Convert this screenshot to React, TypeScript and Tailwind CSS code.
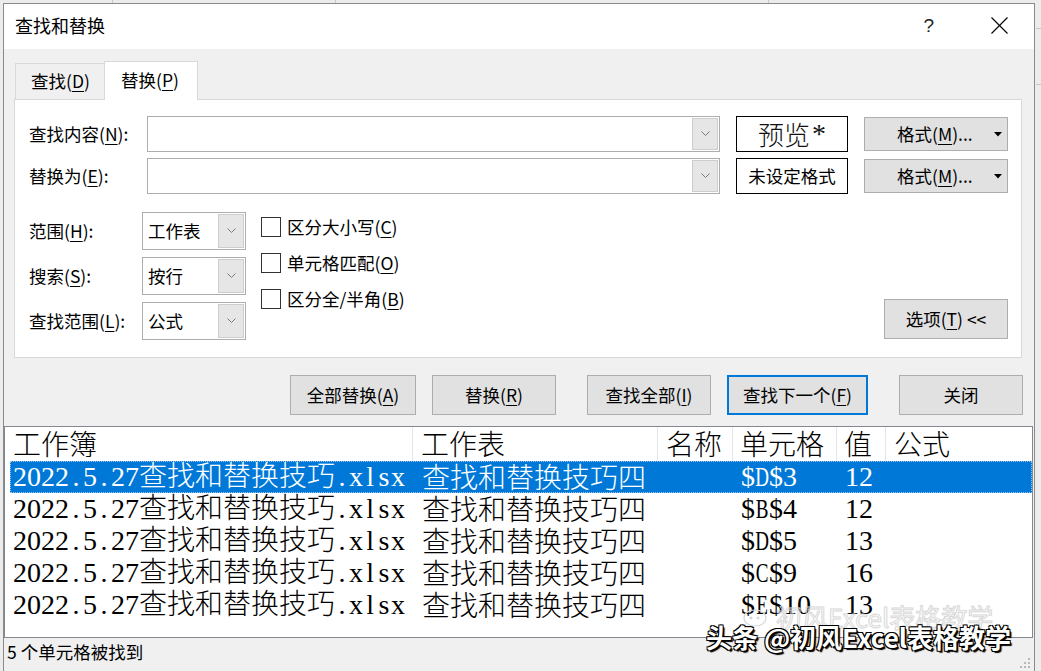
import React from "react";

const K = ({ c }: { c: string }) => (
  <span className="underline decoration-1 underline-offset-[3px]">{c}</span>
);

function Mixed({ t }: { t: string }) {
  const parts = t.split(/([\x00-\x7F]+)/).filter(Boolean);
  return (
    <>
      {parts.map((p, i) =>
        /^[\x00-\x7F]+$/.test(p) ? (
          <span key={i} className="font-['Liberation_Serif',serif]">
            {p.split("").map((ch, j) => (
              <span
                key={j}
                className={
                  /[A-Z]/.test(ch)
                    ? "inline-flex w-[14px] justify-center scale-x-[0.68]"
                    : "inline-flex w-[14px] justify-center"
                }
              >
                {ch}
              </span>
            ))}
          </span>
        ) : (
          <span key={i}>{p}</span>
        )
      )}
    </>
  );
}

const Chevron = () => (
  <svg width="9" height="6" viewBox="0 0 9 6" className="block">
    <polyline points="0.5,0.5 4.5,4.5 8.5,0.5" fill="none" stroke="#7a7a7a" strokeWidth="1" />
  </svg>
);

const DropBtn = () => (
  <div className="w-[26px] h-full bg-[#e6e6e6] border border-[#cdcdcd] flex items-center justify-center">
    <Chevron />
  </div>
);

function Select({ v }: { v: string }) {
  return (
    <div className="w-[104px] h-[38px] border border-[#adadad] bg-white flex items-center p-px">
      <div className="flex-1 pl-[4px] text-[17.5px] leading-none">{v}</div>
      <DropBtn />
    </div>
  );
}

function Check({ children }: { children: React.ReactNode }) {
  return (
    <div className="h-[36px] flex items-center">
      <div className="w-[20px] h-[20px] border border-[#333333] bg-white" />
      <div className="ml-[6px] text-[17.5px] leading-none">{children}</div>
    </div>
  );
}

function Btn({ children, w, focus }: { children: React.ReactNode; w: string; focus?: boolean }) {
  return (
    <div
      className={
        focus
          ? "h-[40px] border-2 border-[#0078d7] bg-[#e1e1e1] flex items-center justify-center text-[17.5px] leading-none " + w
          : "h-[40px] border border-[#adadad] bg-[#e1e1e1] flex items-center justify-center text-[17.5px] leading-none " + w
      }
    >
      {children}
    </div>
  );
}

const rows = [
  ["$D$3", "12"],
  ["$B$4", "12"],
  ["$D$5", "13"],
  ["$C$9", "16"],
  ["$E$10", "13"],
];

export default function App() {
  return (
    <div className="w-[1041px] h-[671px] overflow-hidden bg-[#ececec] relative font-['Noto_Sans_CJK_SC','Noto_Sans',sans-serif] text-black">
      {/* excel background hints */}
      <div className="absolute left-[112px] top-0 w-px h-[3px] bg-[#c8c8c8]" />
      <div className="absolute left-[335px] top-0 w-px h-[3px] bg-[#c8c8c8]" />
      <div className="absolute left-[768px] top-0 w-px h-[3px] bg-[#c8c8c8]" />
      <div className="absolute left-[1036px] top-[28px] w-[5px] h-px bg-[#c8c8c8]" />
      <div className="absolute left-[1036px] top-[84px] w-[5px] h-px bg-[#c8c8c8]" />

      <div className="ml-[3px] mt-[3px] w-[1032px] h-[669px] border-l border-t border-r border-[#8a8a8a] bg-[#f0f0f0] flex flex-col">
        {/* title bar */}
        <div className="h-[45px] bg-white flex items-center pl-[11px] pb-[3px] shrink-0">
          <div className="text-[18px] leading-none">查找和替换</div>
          <div className="flex-1" />
          <div className="text-[19px] leading-none font-['Liberation_Sans',sans-serif] text-[#222]">?</div>
          <div className="ml-[57px] mr-[26px]">
            <svg width="17" height="17" viewBox="0 0 17 17" className="block">
              <line x1="0.5" y1="0.5" x2="16.5" y2="16.5" stroke="#000" strokeWidth="1.1" />
              <line x1="16.5" y1="0.5" x2="0.5" y2="16.5" stroke="#000" strokeWidth="1.1" />
            </svg>
          </div>
        </div>

        {/* tabs */}
        <div className="mt-[12px] h-[38px] flex items-end pl-[11px] shrink-0">
          <div className="w-[89px] h-[36px] border-t border-l border-[#d9d9d9] flex items-center pl-[15px] pb-[2px] text-[17.5px] leading-none">
            查找(<K c="D" />)
          </div>
          <div className="relative z-10 -mb-px w-[94px] h-[39px] bg-white border-t border-l border-r border-[#d9d9d9] flex items-center pl-[16px] pb-[2px] text-[17.5px] leading-none">
            替换(<K c="P" />)
          </div>
        </div>

        {/* panel */}
        <div className="ml-[10px] w-[1008px] h-[259px] bg-white border border-[#d9d9d9] shrink-0 pt-[16px]">
          {/* find row */}
          <div className="h-[36px] flex items-center">
            <div className="w-[132px] pl-[14px] text-[17.5px] leading-none">
              查找内容(<K c="N" />):
            </div>
            <div className="w-[573px] h-[36px] border border-[#adadad] flex justify-end p-px">
              <DropBtn />
            </div>
            <div className="ml-[16px] w-[112px] h-[36px] border border-black flex items-center justify-center text-[26px] leading-none text-[#111] font-light">
              预览<span className="font-['Liberation_Serif',serif] text-[28px] ml-[2px]">*</span>
            </div>
            <div className="ml-[16px] w-[144px] h-[34px] border border-[#adadad] bg-[#e1e1e1] flex items-center text-[17.5px] leading-none">
              <div className="pl-[32px] flex-1">
                格式(<K c="M" />)...
              </div>
              <svg width="8" height="5" viewBox="0 0 8 5" className="mr-[5px]">
                <polygon points="0,0 8,0 4,4.5" fill="#000" />
              </svg>
            </div>
          </div>
          {/* replace row */}
          <div className="mt-[6px] h-[36px] flex items-center">
            <div className="w-[132px] pl-[14px] text-[17.5px] leading-none">
              替换为(<K c="E" />):
            </div>
            <div className="w-[573px] h-[36px] border border-[#adadad] flex justify-end p-px">
              <DropBtn />
            </div>
            <div className="ml-[16px] w-[112px] h-[36px] border border-black flex items-center justify-center text-[17.5px] leading-none">
              未设定格式
            </div>
            <div className="ml-[16px] w-[144px] h-[34px] border border-[#adadad] bg-[#e1e1e1] flex items-center text-[17.5px] leading-none">
              <div className="pl-[32px] flex-1">
                格式(<K c="M" />)...
              </div>
              <svg width="8" height="5" viewBox="0 0 8 5" className="mr-[5px]">
                <polygon points="0,0 8,0 4,4.5" fill="#000" />
              </svg>
            </div>
          </div>

          {/* options section */}
          <div className="mt-[18px] flex h-[128px]">
            <div className="flex flex-col gap-[7px]">
              <div className="h-[38px] flex items-center">
                <div className="w-[127px] pl-[14px] text-[17.5px] leading-none">
                  范围(<K c="H" />):
                </div>
                <Select v="工作表" />
              </div>
              <div className="h-[38px] flex items-center">
                <div className="w-[127px] pl-[14px] text-[17.5px] leading-none">
                  搜索(<K c="S" />):
                </div>
                <Select v="按行" />
              </div>
              <div className="h-[38px] flex items-center">
                <div className="w-[127px] pl-[14px] text-[17.5px] leading-none">
                  查找范围(<K c="L" />):
                </div>
                <Select v="公式" />
              </div>
            </div>
            <div className="ml-[15px] -mt-[3px] flex flex-col">
              <Check>
                区分大小写(<K c="C" />)
              </Check>
              <Check>
                单元格匹配(<K c="O" />)
              </Check>
              <Check>
                区分全/半角(<K c="B" />)
              </Check>
            </div>
            <div className="flex-1" />
            <div className="self-end mb-px mr-[13px] w-[124px] h-[40px] border border-[#adadad] bg-[#e1e1e1] flex items-center justify-center text-[17.5px] leading-none">
              选项(<K c="T" />) &lt;&lt;
            </div>
          </div>
        </div>

        {/* action buttons */}
        <div className="mt-[17px] ml-[286px] flex shrink-0">
          <Btn w="w-[126px]">
            全部替换(<K c="A" />)
          </Btn>
          <div className="ml-[16px]">
            <Btn w="w-[124px]">
              替换(<K c="R" />)
            </Btn>
          </div>
          <div className="ml-[31px]">
            <Btn w="w-[124px]">
              查找全部(<K c="I" />)
            </Btn>
          </div>
          <div className="ml-[16px]">
            <Btn w="w-[141px]" focus>
              查找下一个(<K c="F" />)
            </Btn>
          </div>
          <div className="ml-[31px]">
            <Btn w="w-[124px]">关闭</Btn>
          </div>
        </div>

        {/* results list */}
        <div className="mt-[11px] w-[1029px] h-[212px] border border-[#828790] bg-white shrink-0 text-[28px] leading-none text-black font-light">
          <div className="h-[34px] flex items-center">
            <div className="w-[408px] h-full pl-[8px] pb-[3px] flex items-center border-r border-[#e5e5e5]">工作簿</div>
            <div className="w-[245px] h-full pl-[8px] pb-[3px] flex items-center border-r border-[#e5e5e5]">工作表</div>
            <div className="w-[75px] h-full pl-[8px] pb-[3px] flex items-center border-r border-[#e5e5e5]">名称</div>
            <div className="w-[104px] h-full pl-[7px] pb-[3px] flex items-center border-r border-[#e5e5e5]">单元格</div>
            <div className="w-[49px] h-full pl-[7px] pb-[3px] flex items-center border-r border-[#e5e5e5]">值</div>
            <div className="w-[110px] h-full pl-[8px] pb-[3px] flex items-center">公式</div>
          </div>
          {rows.map((r, i) => (
            <div
              key={i}
              className={
                i === 0
                  ? "ml-[5px] w-[1022px] h-[32px] flex items-center pb-[3px] bg-[#0078d7] text-white outline-1 outline-dotted outline-[#9cc7ee] -outline-offset-1"
                  : "ml-[5px] w-[1022px] h-[32px] flex items-center pb-[3px]"
              }
            >
              <div className="w-[403px] pl-[3px] whitespace-nowrap">
                <Mixed t="2022.5.27查找和替换技巧.xlsx" />
              </div>
              <div className="w-[245px] pl-[9px] whitespace-nowrap">查找和替换技巧四</div>
              <div className="w-[75px]" />
              <div className="w-[104px] pl-[8px] whitespace-nowrap">
                <Mixed t={r[0]} />
              </div>
              <div className="w-[49px] pl-[8px] whitespace-nowrap">
                <Mixed t={r[1]} />
              </div>
            </div>
          ))}
        </div>

        {/* status bar */}
        <div className="flex-1 relative flex items-center pl-[3px] pb-[6px] text-[17.5px] leading-none">
          5 个单元格被找到
          <svg width="12" height="12" viewBox="0 0 12 12" className="absolute right-[3px] bottom-[3px]">
            <rect x="9" y="1" width="2" height="2" fill="#b8b8b8" />
            <rect x="5" y="5" width="2" height="2" fill="#b8b8b8" />
            <rect x="9" y="5" width="2" height="2" fill="#b8b8b8" />
            <rect x="1" y="9" width="2" height="2" fill="#b8b8b8" />
            <rect x="5" y="9" width="2" height="2" fill="#b8b8b8" />
            <rect x="9" y="9" width="2" height="2" fill="#b8b8b8" />
          </svg>
        </div>
      </div>

      {/* watermarks */}
      <div className="absolute left-[742px] top-[604px] flex items-center text-[26px] leading-none text-transparent [-webkit-text-stroke:1px_#d8d8d8]">
        <svg width="26" height="22" viewBox="0 0 26 22" className="mr-[8px]">
          <ellipse cx="13" cy="12" rx="11" ry="8" fill="none" stroke="#d8d8d8" strokeWidth="1.2" />
          <circle cx="9" cy="12" r="1.5" fill="#d8d8d8" />
          <circle cx="16" cy="12" r="1.5" fill="#d8d8d8" />
        </svg>
        初风Excel表格教学
      </div>
      <div className="absolute left-[706px] top-[624px] text-[26px] leading-none text-white font-bold [text-shadow:1px_1px_0_#000,-1px_-1px_0_#000,1px_-1px_0_#000,-1px_1px_0_#000,2px_2px_1px_#000]">
        头条 @初风Excel表格教学
      </div>
    </div>
  );
}
